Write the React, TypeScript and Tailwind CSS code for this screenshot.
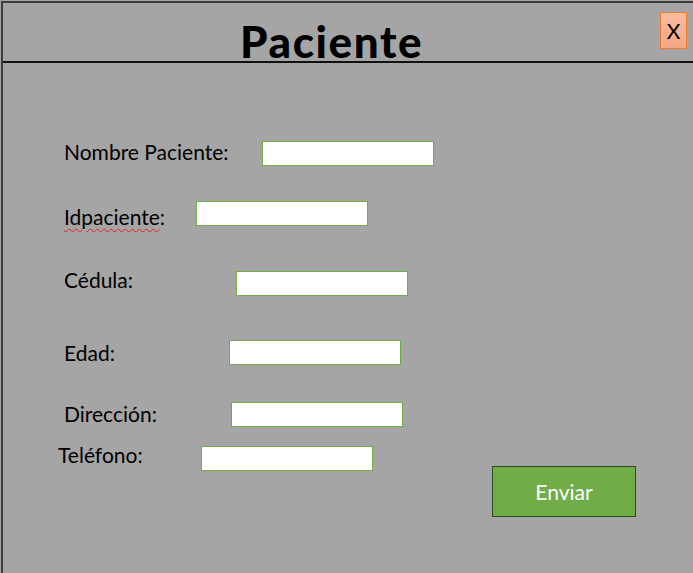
import React from "react";

const font = { fontFamily: "Lato, 'Open Sans', sans-serif" };

function Field({ w }: { w?: string }) {
  return <div className={`h-[25px] w-[172px] bg-white border border-[#70ad47] ${w ?? ""}`} />;
}

export default function App() {
  return (
    <div className="w-[693px] h-[573px] bg-[#a5a5a5] pl-[1px] pt-[1px]" style={font}>
      <div className="w-full h-full border-l-2 border-t-2 border-[#3c3c3c] flex flex-col">
        <div className="h-[60px] border-b-2 border-[#111] flex items-start shrink-0">
          <div className="ml-[237px] mt-[16px] text-[44px] leading-[44px] font-black text-black tracking-[1.6px]">
            Paciente
          </div>
          <div className="ml-auto mr-[6px] mt-[9px] w-[27px] h-[37px] border border-[#ed7d31] bg-gradient-to-b from-[#f9bca0] to-[#f4a784] flex items-center justify-center text-[21px] text-black">
            X
          </div>
        </div>

        <div className="flex flex-col text-[21px] leading-[24px] text-black">
          <div className="flex items-start pl-[61px] mt-[77px]">
            <span className="w-[198px]">Nombre Paciente:</span>
            <div className="mt-[1px]"><Field /></div>
          </div>
          <div className="flex items-start pl-[61px] mt-[35px]">
            <span className="w-[132px] mt-[4px]">
              <span className="underline decoration-wavy decoration-[#e02020] decoration-[1px] underline-offset-[3px]">Idpaciente</span>:
            </span>
            <Field />
          </div>
          <div className="flex items-start pl-[61px] mt-[39px]">
            <span className="w-[172px]">Cédula:</span>
            <div className="mt-[3px]"><Field /></div>
          </div>
          <div className="flex items-start pl-[61px] mt-[44px]">
            <span className="w-[165px] mt-[1px]">Edad:</span>
            <Field />
          </div>
          <div className="flex items-start pl-[61px] mt-[37px]">
            <span className="w-[167px]">Dirección:</span>
            <Field />
          </div>
          <div className="flex items-start pl-[55px] mt-[16px]">
            <span className="w-[143px]">Teléfono:</span>
            <div className="mt-[3px]"><Field /></div>
            <div className="ml-[119px] mt-[23px] w-[144px] h-[51px] bg-[#70ad47] border border-[#2e4b1f] flex items-center justify-center text-white text-[21px]">
              Enviar
            </div>
          </div>
        </div>
      </div>
    </div>
  );
}
